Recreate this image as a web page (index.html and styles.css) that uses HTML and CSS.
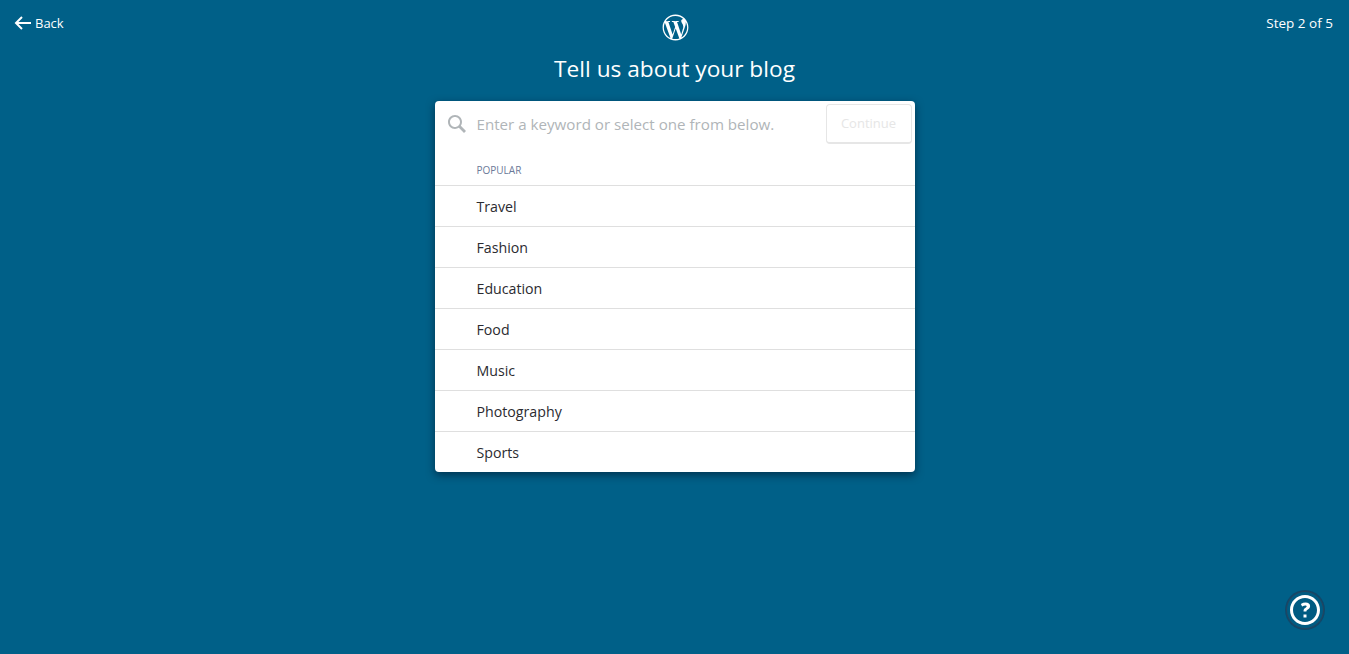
FILE: index.html
```html
<!DOCTYPE html>
<html lang="en">
<head>
    <meta charset="UTF-8">
    <meta name="viewport" content="width=device-width, initial-scale=1.0">
    <title>Tell us about your blog</title>
    <link rel="stylesheet" href="styles.css">
</head>
<body>

    <!-- Top bar -->
    <header class="topbar">
        <a class="back" href="#">
            <svg class="back-icon" viewBox="0 0 24 24"><path d="M20 11H7.414l4.293-4.293-1.414-1.414L3.586 12l6.707 6.707 1.414-1.414L7.414 13H20z"/></svg>
            <span>Back</span>
        </a>
        <svg class="logo" viewBox="0 0 24 24"><path d="M12 2C6.486 2 2 6.486 2 12s4.486 10 10 10 10-4.486 10-10S17.514 2 12 2zM3.010 12c0-1.303.28-2.54.78-3.658l4.286 11.742C5.078 18.628 3.010 15.556 3.010 12zM12 20.990c-.882 0-1.734-.13-2.54-.366l2.698-7.84 2.764 7.57c.018.044.04.085.063.124-.934.33-1.94.512-2.985.512zm1.240-13.207c.54-.028 1.028-.085 1.028-.085.484-.058.427-.77-.057-.742 0 0-1.455.114-2.394.114-.882 0-2.366-.114-2.366-.114-.484-.028-.54.712-.057.74 0 0 .458.058.942.086l1.4 3.835-1.965 5.895-3.27-9.73c.542-.028 1.028-.085 1.028-.085.484-.058.427-.77-.057-.742 0 0-1.455.114-2.394.114-.168 0-.367-.004-.578-.01C6.128 4.35 8.886 3.010 12 3.010c2.32 0 4.434.887 6.018 2.34-.038-.002-.075-.007-.115-.007-.88 0-1.504.767-1.504 1.59 0 .74.427 1.364.882 2.104.34.597.74 1.364.74 2.472 0 .767-.295 1.657-.683 2.897l-.895 2.99-3.243-9.613zm3.280 11.98l2.747-7.94c.513-1.283.684-2.31.684-3.222 0-.33-.022-.637-.06-.924.702 1.28 1.1 2.75 1.1 4.314 0 3.317-1.797 6.21-4.47 7.77z"/></svg>
        <div class="step">Step 2 of 5</div>
    </header>

    <h1 class="title">Tell us about your blog</h1>

    <!-- Vertical picker -->
    <main class="card">
        <div class="search">
            <svg class="search-icon" viewBox="0 0 24 24"><path d="M21 19l-5.154-5.154C16.574 12.742 17 11.42 17 10c0-3.866-3.134-7-7-7s-7 3.134-7 7 3.134 7 7 7c1.42 0 2.742-.426 3.846-1.154L19 21l2-2zM5 10c0-2.757 2.243-5 5-5s5 2.243 5 5-2.243 5-5 5-5-2.243-5-5z"/></svg>
            <span class="placeholder">Enter a keyword or select one from below.</span>
            <button class="continue" disabled>Continue</button>
        </div>
        <div class="label">POPULAR</div>
        <ul class="list">
            <li>Travel</li>
            <li>Fashion</li>
            <li>Education</li>
            <li>Food</li>
            <li>Music</li>
            <li>Photography</li>
            <li>Sports</li>
        </ul>
    </main>

    <!-- Help button -->
    <button class="help">
        <svg viewBox="0 0 24 24"><path d="M12 4c4.410 0 8 3.590 8 8s-3.590 8-8 8-8-3.590-8-8 3.590-8 8-8m0-2C6.477 2 2 6.477 2 12s4.477 10 10 10 10-4.477 10-10S17.523 2 12 2zm1 13h-2v2h2v-2zm-1.962-2v-.528c0-.4.082-.74.246-1.017.163-.276.454-.546.87-.808.333-.21.572-.397.717-.565.146-.168.22-.36.22-.577 0-.172-.078-.308-.234-.41-.156-.1-.358-.15-.608-.15-.62 0-1.34.22-2.168.658l-.854-1.67c1.020-.58 2.084-.872 3.194-.872.912 0 1.637.203 2.174.61.537.407.806.96.806 1.66 0 .5-.118.933-.353 1.3-.235.367-.61.712-1.120 1.035-.43.28-.7.49-.807.632-.107.14-.16.306-.16.497V13h-1.923z"/></svg>
    </button>

</body>
</html>
```

FILE: styles.css
```css
html, body { height: 100%; }
body { margin: 0; background-color: #006088; font-family: "Open Sans", "Noto Sans", sans-serif; color: #fff; overflow: hidden; }

.topbar { display: grid; grid-template-columns: 1fr auto 1fr; align-items: start; padding: 11px 16px 0; height: 42px; box-sizing: border-box; }
.back { display: flex; align-items: center; justify-self: start; margin-left: -5px; color: #fff; font-size: 13px; text-decoration: none; line-height: 20px; }
.back-icon { width: 24px; height: 24px; fill: #fff; }
.logo { width: 31px; height: 31px; fill: #fff; margin: 1px 0 0 2px; }
.step { justify-self: end; margin-top: 2px; font-size: 13.5px; line-height: 20px; }

.title { margin: 0; font-size: 22.7px; font-weight: 400; line-height: 32px; padding-top: 11px; text-align: center; }

.card { width: 480px; margin: 16px auto 0; background-color: #fff; border-radius: 4px; box-shadow: 0 3px 8px rgba(0, 20, 40, 0.6); color: #2e4453; overflow: hidden; }

.search { display: flex; align-items: center; height: 43px; padding: 3px 3px 0 10px; box-sizing: border-box; }
.search-icon { width: 24px; height: 24px; fill: #b0b5b8; margin: -1px 8px 0 0; }
.placeholder { flex: 1; font-size: 15.15px; color: #b0b5b8; }
.continue { width: 86px; height: 40px; background: #fff; border: 1px solid #e6e6e6; border-bottom-width: 2px; border-radius: 4px; color: #e6e6e6; font-family: inherit; font-size: 13px; padding: 0 0 2px; }

.label { padding: 17px 0 0 42px; height: 24px; font-size: 10px; line-height: 18px; color: #6b7a99; }

.list { list-style: none; margin: 0; padding: 0; }
.list li { height: 40px; line-height: 42px; border-top: 1px solid #dfdfdf; padding-left: 42px; font-size: 14.2px; color: #2b2b30; }

.help { position: absolute; right: 25px; bottom: 25px; width: 38px; height: 38px; padding: 0; display: flex; align-items: center; justify-content: center; background-color: #005b82; border: 1px solid #26455f; border-radius: 50%; box-shadow: 0 0 0 1px rgba(30, 50, 80, 0.5); }
.help svg { width: 36px; height: 36px; fill: #fff; }
```
